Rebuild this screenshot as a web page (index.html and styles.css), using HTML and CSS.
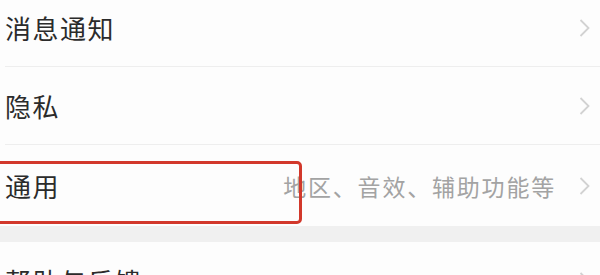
FILE: index.html
```html
<!DOCTYPE html>
<html lang="zh-CN">
<head>
<meta charset="utf-8">
<link rel="stylesheet" href="styles.css">
</head>
<body>
<div class="page">
  <div class="group">
    <div class="row">
      <span class="label">消息通知</span>
      <span class="right"><svg class="chev" viewBox="0 0 12 20"><path d="M2 2 L10 10 L2 18"/></svg></span>
    </div>
    <div class="row">
      <span class="label">隐私</span>
      <span class="right"><svg class="chev" viewBox="0 0 12 20"><path d="M2 2 L10 10 L2 18"/></svg></span>
    </div>
    <div class="row last highlight">
      <span class="label">通用</span>
      <span class="right"><span class="hint">地区、音效、辅助功能等</span><svg class="chev" viewBox="0 0 12 20"><path d="M2 2 L10 10 L2 18"/></svg></span>
      <div class="mark"></div>
    </div>
  </div>
  <div class="gap"></div>
  <div class="group">
    <div class="row">
      <span class="label">帮助与反馈</span>
      <span class="right"><svg class="chev" viewBox="0 0 12 20"><path d="M2 2 L10 10 L2 18"/></svg></span>
    </div>
  </div>
</div>
</body>
</html>
```

FILE: styles.css
```css
html, body {
  margin: 0;
  padding: 0;
  background: #ffffff;
  overflow: hidden;
}
.page {
  width: 600px;
  margin-top: -11px;
  font-family: "Noto Sans CJK SC", "Noto Sans", sans-serif;
}
.group {
  background: #fdfdfd;
}
.row {
  position: relative;
  height: 77px;
  margin-left: 5px;
  display: flex;
  align-items: center;
  justify-content: space-between;
  border-bottom: 1px solid #eeeeee;
}
.row.last {
  height: 81px;
  border-bottom: none;
}
.label {
  font-size: 26px;
  color: #2b2b2b;
  letter-spacing: 1.5px;
}
.right {
  display: flex;
  align-items: center;
  padding-right: 9px;
}
.hint {
  font-size: 23px;
  color: #a3a3a3;
  margin-right: 22px;
  letter-spacing: 1.8px;
}
.chev {
  width: 13px;
  height: 20px;
  fill: none;
  stroke: #d2d2d2;
  stroke-width: 1.8;
}
.mark {
  position: absolute;
  left: -16px;
  top: 16px;
  width: 307px;
  height: 57px;
  border: 3px solid #d2382b;
  border-radius: 5px;
}
.gap {
  height: 16px;
  background: #f0f0f0;
}
```
